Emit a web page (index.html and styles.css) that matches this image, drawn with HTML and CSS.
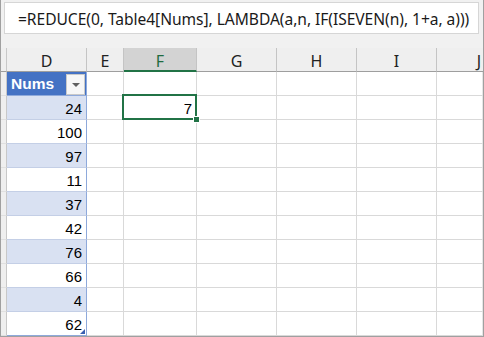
FILE: index.html
```html
<!DOCTYPE html>
<html>
<head>
<meta charset="utf-8">
<link rel="stylesheet" href="styles.css">
</head>
<body>
<div class="app">
  <div class="fbar"><div class="fbox">=REDUCE(0, Table4[Nums], LAMBDA(a,n, IF(ISEVEN(n), 1+a, a)))</div></div>
  <div class="sheet">
    <div class="ch rh"></div><div class="ch">D</div><div class="ch">E</div><div class="ch sel">F</div><div class="ch">G</div><div class="ch">H</div><div class="ch">I</div><div class="ch last">J</div>

    <div class="rh"></div><div class="c th"><span>Nums</span><span class="dd"><span class="tri"></span></span></div><div class="c"></div><div class="c"></div><div class="c"></div><div class="c"></div><div class="c"></div><div class="c last"></div>

    <div class="rh"></div><div class="c t band">24</div><div class="c"></div><div class="c num active">7<span class="handle"></span></div><div class="c"></div><div class="c"></div><div class="c"></div><div class="c last"></div>

    <div class="rh"></div><div class="c t">100</div><div class="c"></div><div class="c"></div><div class="c"></div><div class="c"></div><div class="c"></div><div class="c last"></div>

    <div class="rh"></div><div class="c t band">97</div><div class="c"></div><div class="c"></div><div class="c"></div><div class="c"></div><div class="c"></div><div class="c last"></div>

    <div class="rh"></div><div class="c t">11</div><div class="c"></div><div class="c"></div><div class="c"></div><div class="c"></div><div class="c"></div><div class="c last"></div>

    <div class="rh"></div><div class="c t band">37</div><div class="c"></div><div class="c"></div><div class="c"></div><div class="c"></div><div class="c"></div><div class="c last"></div>

    <div class="rh"></div><div class="c t">42</div><div class="c"></div><div class="c"></div><div class="c"></div><div class="c"></div><div class="c"></div><div class="c last"></div>

    <div class="rh"></div><div class="c t band">76</div><div class="c"></div><div class="c"></div><div class="c"></div><div class="c"></div><div class="c"></div><div class="c last"></div>

    <div class="rh"></div><div class="c t">66</div><div class="c"></div><div class="c"></div><div class="c"></div><div class="c"></div><div class="c"></div><div class="c last"></div>

    <div class="rh"></div><div class="c t band">4</div><div class="c"></div><div class="c"></div><div class="c"></div><div class="c"></div><div class="c"></div><div class="c last"></div>

    <div class="rh"></div><div class="c t tend">62<span class="resize"></span></div><div class="c"></div><div class="c"></div><div class="c"></div><div class="c"></div><div class="c"></div><div class="c last"></div>
  </div>
</div>
</body>
</html>
```

FILE: styles.css
```css
* { box-sizing: border-box; }
html, body { margin: 0; padding: 0; background: #fff; }
.app {
  width: 484px;
  height: 337px;
  background: #f1f1f1;
  border-left: 1px solid #a0a0a0;
  border-right: 1px solid #a0a0a0;
  border-bottom: 1px solid #a0a0a0;
  display: flex;
  flex-direction: column;
  overflow: hidden;
}
.fbar {
  padding: 2px 4px 0 3px;
  height: 48px;
}
.fbox {
  height: 32px;
  background: #fff;
  border: 1px solid #d6d6d6;
  font-family: "Noto Sans", "Open Sans", sans-serif;
  font-size: 15.6px;
  color: #1a1a1a;
  padding: 5px 0 0 13px;
  white-space: nowrap;
  letter-spacing: -0.05px;
  overflow: hidden;
}
.sheet {
  display: grid;
  grid-template-columns: 6px 80px 37px 73px 80px 80px 80px 46px;
  grid-auto-rows: 24px;
}
.ch {
  background: #efefef;
  border-right: 1px solid #c4c4c4;
  border-bottom: 1px solid #9e9e9e;
  font-family: "Noto Sans", "Open Sans", sans-serif;
  font-size: 16px;
  color: #222;
  display: flex;
  align-items: center;
  justify-content: center;
  padding-top: 3px;
}
.ch.sel {
  background: #d3d3d3;
  color: #1f6b3f;
  border-bottom: 2px solid #217346;
}
.ch.last { justify-content: flex-end; padding-right: 2px; border-right: none; }
.rh {
  background: #efefef;
  border-right: 1px solid #c8c8c8;
  border-bottom: 1px solid #e0e0e0;
}
.ch.rh { border-bottom: 1px solid #9e9e9e; }
.c {
  background: #fff;
  border-right: 1px solid #d9d9d9;
  border-bottom: 1px solid #d9d9d9;
  font-family: "Liberation Sans", Arial, sans-serif;
  font-size: 15px;
  color: #000;
  position: relative;
}
.c.last { border-right: 1px solid #e6e6e6; }
.t, .num {
  display: flex;
  align-items: flex-end;
  justify-content: flex-end;
  padding: 0 4px 2px 0;
}
.t {
  border-right: 1px solid #8ea9db;
  border-bottom: 1px solid #c4cfe6;
}
.t.band { background: #d9e1f2; }
.t.tend { border-bottom: 1px solid #8ea9db; }
.th {
  background: #4472c4;
  border-right: 1px solid #8ea9db;
  border-bottom: 1px solid #8ea9db;
  color: #fff;
  font-weight: bold;
  font-size: 15.5px;
  display: flex;
  align-items: center;
  justify-content: space-between;
  padding: 1px 1px 0 4px;
}
.dd {
  width: 19px;
  height: 21px;
  background: #f7f7f7;
  border: 1px solid #c9c9c9;
  display: flex;
  align-items: center;
  justify-content: center;
}
.tri {
  width: 0;
  height: 0;
  border-left: 4px solid transparent;
  border-right: 4px solid transparent;
  border-top: 4px solid #606060;
  margin-top: 1px;
}
.active::after {
  content: "";
  position: absolute;
  left: -2px;
  top: -2px;
  right: -1px;
  bottom: -1px;
  border: 2px solid #217346;
}
.handle {
  position: absolute;
  left: 69px;
  top: 20px;
  width: 7px;
  height: 7px;
  background: #217346;
  border: 1px solid #fff;
  z-index: 2;
}
.resize {
  position: absolute;
  right: 1px;
  bottom: 1px;
  width: 0;
  height: 0;
  border-left: 5px solid transparent;
  border-bottom: 5px solid #3a5fb0;
}
```
